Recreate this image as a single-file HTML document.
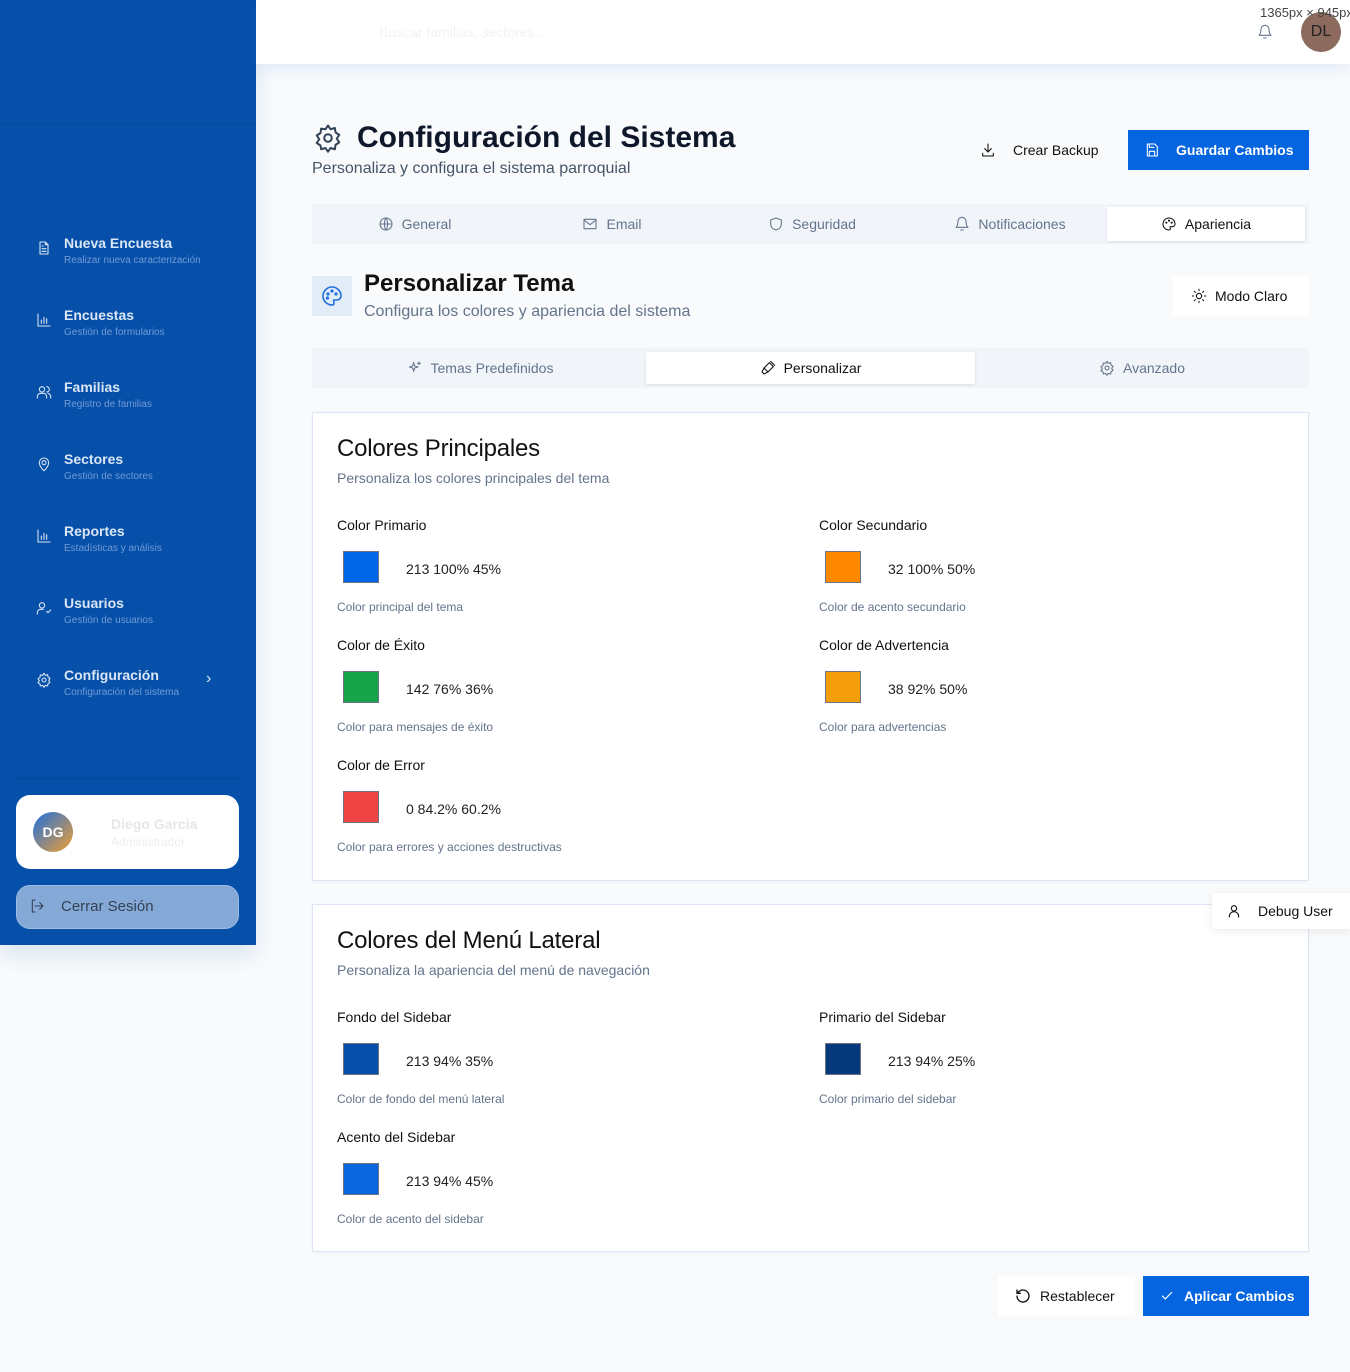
<!DOCTYPE html>
<html><head><meta charset="utf-8"><style>
*{box-sizing:border-box;margin:0;padding:0}
body{width:1350px;height:1372px;position:relative;background:#f8fafc;font-family:"Liberation Sans",sans-serif;overflow:hidden;color:#0f172a}
.a{position:absolute}
.sb{left:0;top:0;width:256px;height:945px;background:#0650aa;box-shadow:0 10px 20px rgba(6,80,170,.12)}
.ni{position:absolute;left:36px;width:200px}
.ni svg{position:absolute;left:0;top:4px}
.ni b{position:absolute;left:28px;top:-1px;font-size:14px;color:#dbe6f5;white-space:nowrap}
.ni small{position:absolute;left:28px;top:19px;font-size:10px;color:#6f9ad4;white-space:nowrap}
.hdr{left:256px;top:0;width:1094px;height:64px;background:#fff;box-shadow:0 4px 14px rgba(100,140,220,.15)}
.card{background:#fff;border:1px solid #dbe5f3;box-shadow:0 1px 3px rgba(0,0,0,.04)}
.lbl{font-size:14px;color:#111}
.sw{width:36px;height:32px;border:1px solid #6b7280}
.val{font-size:14px;color:#222}
.hint{font-size:12px;color:#64748b}
.tab{position:absolute;top:0;height:100%;display:flex;align-items:center;justify-content:center;gap:8px;font-size:14px;color:#64748b}
svg{fill:none;stroke:currentColor;stroke-width:1.6;stroke-linecap:round;stroke-linejoin:round}
.h2{font-size:24px;color:#111;font-weight:500;letter-spacing:-.2px}
</style></head><body>

<div class="a sb">
 <div class="a" style="left:0;top:124px;width:256px;height:1px;background:#05489a"></div>
 <div class="ni" style="top:236px"><svg width="16" height="16" viewBox="0 0 24 24" style="color:#dbe6f5"><path d="M14 3H6v18h12V7z M14 3v4h4 M9 13h6 M9 17h6 M9 9h2"/></svg><b>Nueva Encuesta</b><small>Realizar nueva caracterización</small></div>
 <div class="ni" style="top:308px"><svg width="16" height="16" viewBox="0 0 24 24" style="color:#dbe6f5"><path d="M3 3v18h18 M8 17v-5 M12 17V8 M16 17v-7"/></svg><b>Encuestas</b><small>Gestión de formularios</small></div>
 <div class="ni" style="top:380px"><svg width="16" height="16" viewBox="0 0 24 24" style="color:#dbe6f5"><circle cx="9" cy="8" r="4"/><path d="M2 21v-2a5 5 0 0 1 5-5h4a5 5 0 0 1 5 5v2 M16 4a4 4 0 0 1 0 8 M22 21v-2a5 5 0 0 0-4-5"/></svg><b>Familias</b><small>Registro de familias</small></div>
 <div class="ni" style="top:452px"><svg width="16" height="16" viewBox="0 0 24 24" style="color:#dbe6f5"><path d="M12 22s7-6 7-12a7 7 0 0 0-14 0c0 6 7 12 7 12z"/><circle cx="12" cy="10" r="3"/></svg><b>Sectores</b><small>Gestión de sectores</small></div>
 <div class="ni" style="top:524px"><svg width="16" height="16" viewBox="0 0 24 24" style="color:#dbe6f5"><path d="M3 3v18h18 M8 17v-5 M12 17V8 M16 17v-7"/></svg><b>Reportes</b><small>Estadísticas y análisis</small></div>
 <div class="ni" style="top:596px"><svg width="16" height="16" viewBox="0 0 24 24" style="color:#dbe6f5"><circle cx="9" cy="8" r="4"/><path d="M2 21v-2a5 5 0 0 1 5-5h4 M16 17l2 2 4-4"/></svg><b>Usuarios</b><small>Gestión de usuarios</small></div>
 <div class="ni" style="top:668px"><svg width="16" height="16" viewBox="0 0 24 24" style="color:#dbe6f5"><circle cx="12" cy="12" r="3"/><path d="M12 2l2 3 3.5-1 .5 3.5 3 2-2 3 2 3-3 2-.5 3.5-3.5-1-2 3-2-3-3.5 1L6 18l-3-2 2-3-2-3 3-2 .5-3.5L10 5z"/></svg><b>Configuración</b><small>Configuración del sistema</small><span class="a" style="left:170px;top:2px;color:#dbe6f5;font-size:16px">›</span></div>
 <div class="a" style="left:16px;top:778px;width:224px;height:1px;background:#05469a"></div>
 <div class="a" style="left:16px;top:795px;width:223px;height:74px;background:#fff;border-radius:14px"></div>
 <div class="a" style="left:33px;top:812px;width:40px;height:40px;border-radius:50%;background:linear-gradient(135deg,#1d6fe0,#f0a030);color:#fff;font-weight:bold;font-size:14px;display:flex;align-items:center;justify-content:center">DG</div>
 <div class="a" style="left:111px;top:816px;font-size:14px;color:#e5e7eb;font-weight:bold">Diego Garcia</div>
 <div class="a" style="left:111px;top:835px;font-size:12px;color:#eceef1">Administrador</div>
 <div class="a" style="left:16px;top:885px;width:223px;height:44px;background:#85a9d6;border:1px solid #9fbde3;border-radius:14px"></div>
 <svg class="a" style="left:29px;top:898px;color:#334155" width="16" height="16" viewBox="0 0 24 24"><path d="M9 21H5V3h4 M16 17l5-5-5-5 M21 12H9"/></svg>
 <div class="a" style="left:61px;top:898px;font-size:15px;color:#334155">Cerrar Sesión</div>
</div>

<div class="a hdr">
 <div class="a" style="left:123px;top:24px;font-size:14px;color:#f0f2f5">Buscar familias, sectores...</div>
 <svg class="a" style="left:1001px;top:24px;color:#64748b" width="16" height="16" viewBox="0 0 24 24"><path d="M6 8a6 6 0 0 1 12 0c0 7 3 9 3 9H3s3-2 3-9 M10 21h4"/></svg>
 <div class="a" style="left:1045px;top:12px;width:40px;height:40px;border-radius:50%;background:#8c6a5e;color:#222;font-size:16px;display:flex;align-items:center;justify-content:center">DL</div>
 <div class="a" style="left:1004px;top:5px;font-size:13px;color:#444;white-space:nowrap">1365px × 945px</div>
</div>

<svg class="a" style="left:313px;top:123px;color:#334155" width="30" height="30" viewBox="0 0 24 24"><circle cx="12" cy="12" r="3"/><path d="M12 2l2 3 3.5-1 .5 3.5 3 2-2 3 2 3-3 2-.5 3.5-3.5-1-2 3-2-3-3.5 1L6 18l-3-2 2-3-2-3 3-2 .5-3.5L10 5z"/></svg>
<div class="a" style="left:357px;top:121px;font-size:30px;font-weight:bold;color:#0f172a">Configuración del Sistema</div>
<div class="a" style="left:312px;top:160px;font-size:16px;color:#475569">Personaliza y configura el sistema parroquial</div>
<svg class="a" style="left:980px;top:142px;color:#111" width="16" height="16" viewBox="0 0 24 24"><path d="M12 3v12 M7 10l5 5 5-5 M4 17v4h16v-4"/></svg>
<div class="a" style="left:1013px;top:142px;font-size:14px;color:#111">Crear Backup</div>
<div class="a" style="left:1128px;top:130px;width:181px;height:40px;background:#0565e0;color:#fff;font-weight:bold;font-size:14px;display:flex;align-items:center;padding-left:48px">Guardar Cambios</div>
<svg class="a" style="left:1144px;top:142px;color:#fff" width="16" height="16" viewBox="0 0 24 24"><path d="M5 3h11l4 4v14H5z M8 3v5h7 M8 21v-7h8v7"/></svg>

<div class="a" style="left:312px;top:204px;width:997px;height:40px;background:#f1f5f9">
 <div class="tab" style="left:0;width:205px"><svg width="16" height="16" viewBox="0 0 24 24"><circle cx="12" cy="12" r="9"/><path d="M3 12h18 M12 3c3 3 3 15 0 18 M12 3c-3 3-3 15 0 18"/></svg>General</div>
 <div class="tab" style="left:200px;width:200px"><svg width="16" height="16" viewBox="0 0 24 24"><rect x="3" y="5" width="18" height="14"/><path d="M3 6l9 7 9-7"/></svg>Email</div>
 <div class="tab" style="left:400px;width:200px"><svg width="16" height="16" viewBox="0 0 24 24"><path d="M12 3l8 3v6c0 5-4 8-8 9-4-1-8-4-8-9V6z"/></svg>Seguridad</div>
 <div class="tab" style="left:598px;width:200px"><svg width="16" height="16" viewBox="0 0 24 24"><path d="M6 8a6 6 0 0 1 12 0c0 7 3 9 3 9H3s3-2 3-9 M10 21h4"/></svg>Notificaciones</div>
 <div class="tab" style="left:795px;top:3px;height:34px;width:198px;background:#fff;color:#111;box-shadow:0 1px 3px rgba(0,0,0,.1)"><svg width="16" height="16" viewBox="0 0 24 24"><path d="M12 3a9 9 0 0 0 0 18c1.5 0 2-1 2-2s-1-2 0-3h3a4 4 0 0 0 4-4c0-5-4-9-9-9z"/><circle cx="8" cy="10" r=".8"/><circle cx="12" cy="7" r=".8"/><circle cx="16" cy="10" r=".8"/></svg>Apariencia</div>
</div>

<div class="a" style="left:312px;top:276px;width:40px;height:40px;background:#e2ecf8"></div>
<svg class="a" style="left:320px;top:284px;color:#1d6fe0" width="24" height="24" viewBox="0 0 24 24"><path d="M12 3a9 9 0 0 0 0 18c1.5 0 2-1 2-2s-1-2 0-3h3a4 4 0 0 0 4-4c0-5-4-9-9-9z"/><circle cx="8" cy="10" r=".8"/><circle cx="12" cy="7" r=".8"/><circle cx="16" cy="10" r=".8"/><circle cx="7.5" cy="14" r=".8"/></svg>
<div class="a" style="left:364px;top:270px;font-size:24px;font-weight:bold;color:#111">Personalizar Tema</div>
<div class="a" style="left:364px;top:303px;font-size:16px;color:#64748b">Configura los colores y apariencia del sistema</div>
<div class="a" style="left:1173px;top:276px;width:136px;height:40px;background:#fff;display:flex;align-items:center;padding-left:18px;gap:8px;font-size:14px;color:#111"><svg width="16" height="16" viewBox="0 0 24 24"><circle cx="12" cy="12" r="4"/><path d="M12 2v2 M12 20v2 M2 12h2 M20 12h2 M5 5l1.5 1.5 M17.5 17.5L19 19 M5 19l1.5-1.5 M17.5 6.5L19 5"/></svg>Modo Claro</div>

<div class="a" style="left:312px;top:348px;width:997px;height:40px;background:#f1f5f9">
 <div class="tab" style="left:0;width:336px"><svg width="16" height="16" viewBox="0 0 24 24"><path d="M10 4l1.5 5 5 1.5-5 1.5L10 17l-1.5-5-5-1.5 5-1.5z M18 3v4 M16 5h4"/></svg>Temas Predefinidos</div>
 <div class="tab" style="left:334px;top:4px;height:32px;width:329px;background:#fff;color:#111;box-shadow:0 1px 3px rgba(0,0,0,.1)"><svg width="16" height="16" viewBox="0 0 24 24"><path d="M14 4l6 6-8 8-6-6z M6 12l-3 6 3 3 6-3 M16 2l6 6"/></svg>Personalizar</div>
 <div class="tab" style="left:660px;width:340px"><svg width="16" height="16" viewBox="0 0 24 24"><circle cx="12" cy="12" r="3"/><path d="M12 2l2 3 3.5-1 .5 3.5 3 2-2 3 2 3-3 2-.5 3.5-3.5-1-2 3-2-3-3.5 1L6 18l-3-2 2-3-2-3 3-2 .5-3.5L10 5z"/></svg>Avanzado</div>
</div>

<div class="a card" style="left:312px;top:412px;width:997px;height:469px">
 <div class="a h2" style="left:24px;top:22px">Colores Principales</div>
 <div class="a" style="left:24px;top:57px;font-size:14px;color:#64748b">Personaliza los colores principales del tema</div>

 <div class="a lbl" style="left:24px;top:104px">Color Primario</div>
 <div class="a sw" style="left:30px;top:138px;background:#0066e6"></div>
 <div class="a val" style="left:93px;top:148px">213 100% 45%</div>
 <div class="a hint" style="left:24px;top:187px">Color principal del tema</div>

 <div class="a lbl" style="left:506px;top:104px">Color Secundario</div>
 <div class="a sw" style="left:512px;top:138px;background:#ff8800"></div>
 <div class="a val" style="left:575px;top:148px">32 100% 50%</div>
 <div class="a hint" style="left:506px;top:187px">Color de acento secundario</div>

 <div class="a lbl" style="left:24px;top:224px">Color de Éxito</div>
 <div class="a sw" style="left:30px;top:258px;background:#16a34a"></div>
 <div class="a val" style="left:93px;top:268px">142 76% 36%</div>
 <div class="a hint" style="left:24px;top:307px">Color para mensajes de éxito</div>

 <div class="a lbl" style="left:506px;top:224px">Color de Advertencia</div>
 <div class="a sw" style="left:512px;top:258px;background:#f59e0b"></div>
 <div class="a val" style="left:575px;top:268px">38 92% 50%</div>
 <div class="a hint" style="left:506px;top:307px">Color para advertencias</div>

 <div class="a lbl" style="left:24px;top:344px">Color de Error</div>
 <div class="a sw" style="left:30px;top:378px;background:#ef4444"></div>
 <div class="a val" style="left:93px;top:388px">0 84.2% 60.2%</div>
 <div class="a hint" style="left:24px;top:427px">Color para errores y acciones destructivas</div>
</div>

<div class="a card" style="left:312px;top:904px;width:997px;height:348px">
 <div class="a h2" style="left:24px;top:22px">Colores del Menú Lateral</div>
 <div class="a" style="left:24px;top:57px;font-size:14px;color:#64748b">Personaliza la apariencia del menú de navegación</div>

 <div class="a lbl" style="left:24px;top:104px">Fondo del Sidebar</div>
 <div class="a sw" style="left:30px;top:138px;background:#0650aa"></div>
 <div class="a val" style="left:93px;top:148px">213 94% 35%</div>
 <div class="a hint" style="left:24px;top:187px">Color de fondo del menú lateral</div>

 <div class="a lbl" style="left:506px;top:104px">Primario del Sidebar</div>
 <div class="a sw" style="left:512px;top:138px;background:#043a7b"></div>
 <div class="a val" style="left:575px;top:148px">213 94% 25%</div>
 <div class="a hint" style="left:506px;top:187px">Color primario del sidebar</div>

 <div class="a lbl" style="left:24px;top:224px">Acento del Sidebar</div>
 <div class="a sw" style="left:30px;top:258px;background:#0b67dd"></div>
 <div class="a val" style="left:93px;top:268px">213 94% 45%</div>
 <div class="a hint" style="left:24px;top:307px">Color de acento del sidebar</div>
</div>

<div class="a" style="left:1212px;top:893px;width:138px;height:36px;background:#fff;box-shadow:0 2px 8px rgba(0,0,0,.08);display:flex;align-items:center;padding-left:14px;gap:16px;font-size:14px;color:#111"><svg width="16" height="16" viewBox="0 0 24 24"><circle cx="12" cy="8" r="4"/><path d="M5 21v-1a7 7 0 0 1 14 0v1"/></svg>Debug User</div>

<div class="a" style="left:998px;top:1276px;width:137px;height:40px;background:#fff;display:flex;align-items:center;padding-left:17px;gap:9px;font-size:14px;color:#111"><svg width="16" height="16" viewBox="0 0 24 24" style="stroke-width:2"><path d="M3 12a9 9 0 1 0 3-6.7L3 8 M3 3v5h5"/></svg>Restablecer</div>
<div class="a" style="left:1143px;top:1276px;width:166px;height:40px;background:#0565e0;display:flex;align-items:center;padding-left:17px;gap:10px;font-size:14px;font-weight:bold;color:#fff"><svg width="14" height="14" viewBox="0 0 24 24" style="stroke-width:2"><path d="M4 12l5 5L20 6"/></svg>Aplicar Cambios</div>

</body></html>
